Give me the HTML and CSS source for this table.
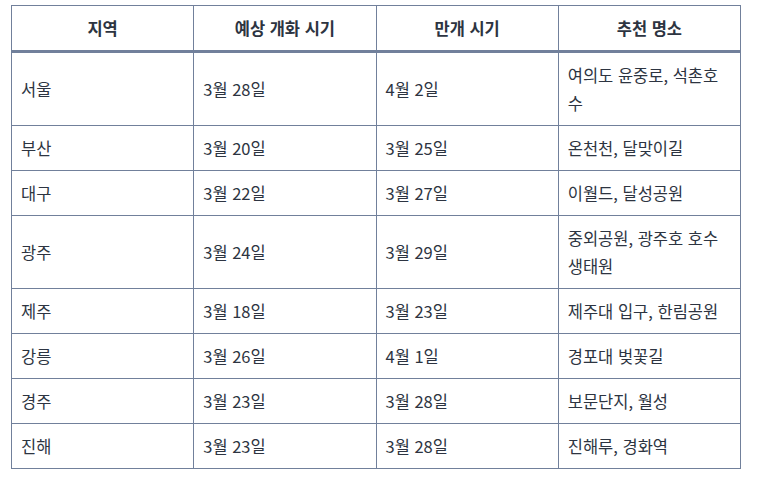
FILE: index.html
```html
<!DOCTYPE html>
<html lang="ko">
<head>
<meta charset="utf-8">
<link rel="stylesheet" href="styles.css">
</head>
<body>
<div class="wrap">
<table class="bloom">
  <thead>
    <tr><th>지역</th><th>예상 개화 시기</th><th>만개 시기</th><th>추천 명소</th></tr>
  </thead>
  <tbody>
    <tr><td>서울</td><td>3월 28일</td><td>4월 2일</td><td>여의도 윤중로, 석촌호수</td></tr>
    <tr><td>부산</td><td>3월 20일</td><td>3월 25일</td><td>온천천, 달맞이길</td></tr>
    <tr><td>대구</td><td>3월 22일</td><td>3월 27일</td><td>이월드, 달성공원</td></tr>
    <tr><td>광주</td><td>3월 24일</td><td>3월 29일</td><td>중외공원, 광주호 호수 생태원</td></tr>
    <tr><td>제주</td><td>3월 18일</td><td>3월 23일</td><td>제주대 입구, 한림공원</td></tr>
    <tr><td>강릉</td><td>3월 26일</td><td>4월 1일</td><td>경포대 벚꽃길</td></tr>
    <tr><td>경주</td><td>3월 23일</td><td>3월 28일</td><td>보문단지, 월성</td></tr>
    <tr><td>진해</td><td>3월 23일</td><td>3월 28일</td><td>진해루, 경화역</td></tr>
  </tbody>
</table>
</div>
</body>
</html>
```
FILE: styles.css
```css
html, body {
  margin: 0;
  padding: 0;
  background: #ffffff;
}
.wrap {
  padding: 5px 0 0 11px;
}
.bloom {
  width: 730px;
  border-collapse: collapse;
  table-layout: fixed;
  font-family: "Noto Sans CJK KR", "Noto Sans", sans-serif;
  font-size: 16.5px;
  line-height: 28px;
  color: #2d3441;
}
.bloom th,
.bloom td {
  border: 1px solid #71809b;
  padding: 8px 9px;
  text-align: left;
  vertical-align: middle;
}
.bloom th {
  text-align: center;
  font-weight: 700;
  border-bottom: 3px solid #71809b;
}
```
